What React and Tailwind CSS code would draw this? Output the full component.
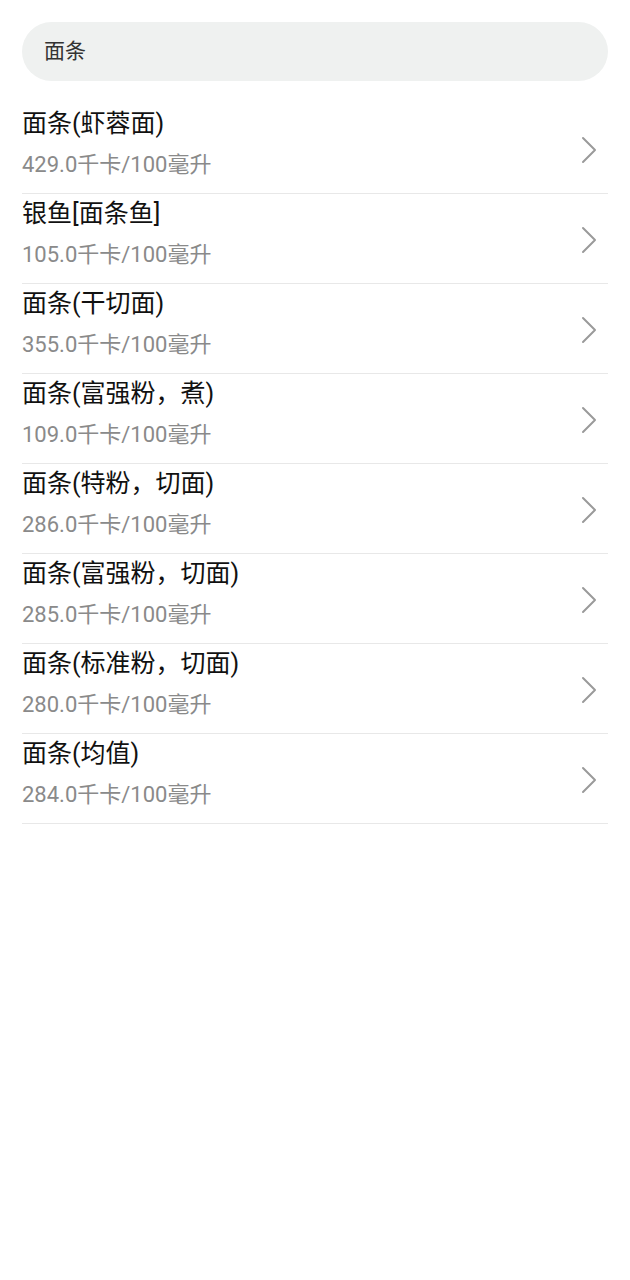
import React from 'react';

const foods = [
    { name: '面条(虾蓉面)', kcal: '429.0' },
    { name: '银鱼[面条鱼]', kcal: '105.0' },
    { name: '面条(干切面)', kcal: '355.0' },
    { name: '面条(富强粉，煮)', kcal: '109.0' },
    { name: '面条(特粉，切面)', kcal: '286.0' },
    { name: '面条(富强粉，切面)', kcal: '285.0' },
    { name: '面条(标准粉，切面)', kcal: '280.0' },
    { name: '面条(均值)', kcal: '284.0' },
];

const font = { fontFamily: 'Roboto, "Noto Sans CJK SC", sans-serif' };

function Chevron() {
    return (
        <svg width="18" height="28" viewBox="0 0 18 28" fill="none" className="text-[#9a9a9a]">
            <path d="M3 2 L15 14 L3 26" stroke="currentColor" strokeWidth="2" strokeLinecap="round" strokeLinejoin="round" />
        </svg>
    );
}

export default function App() {
    return (
        <div className="min-h-screen bg-white px-[22px] pt-[22px]" style={font}>
            <div className="h-[59px] rounded-full bg-[#eff1f0] flex items-center px-[22px]">
                <span className="text-[21px] text-[#333]">面条</span>
            </div>

            <div className="mt-[23px]">
                {foods.map((f) => (
                    <div key={f.name} className="h-[90px] border-b border-[#e8e8e8] flex items-center">
                        <div className="flex-1 flex flex-col">
                            <div className="text-[25px] leading-[32px] text-[#111] -mt-[10px]">{f.name}</div>
                            <div className="text-[22px] leading-[30px] text-[#8a8a8a] mt-[10px]">
                                {f.kcal}千卡/100毫升
                            </div>
                        </div>
                        <div className="pr-[10px] pt-[2px]">
                            <Chevron />
                        </div>
                    </div>
                ))}
            </div>
        </div>
    );
}
